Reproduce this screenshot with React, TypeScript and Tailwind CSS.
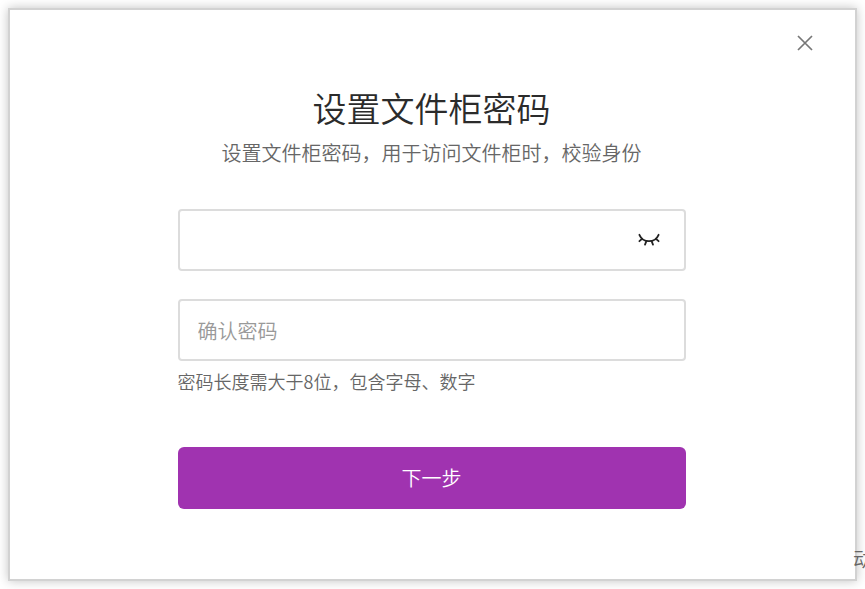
import { useState } from 'react'

const fieldStyle =
  'h-[62px] w-full rounded-[4px] border-2 border-[#dcdcdc] bg-white pl-[18px] pr-16 text-[20px] text-[#333] outline-none placeholder:text-[#999] focus:border-[#a033b0]'

function CloseIcon() {
  return (
    <svg viewBox="0 0 16 16" className="h-4 w-4" fill="none" stroke="currentColor" strokeWidth="1.7">
      <path d="M1 1l14 14M15 1L1 15" />
    </svg>
  )
}

function ClosedEyeIcon() {
  return (
    <svg
      viewBox="0 0 24 14"
      className="h-[14px] w-6"
      fill="none"
      stroke="currentColor"
      strokeWidth="1.8"
      strokeLinecap="round"
    >
      <path d="M1.4 1.8C3 5.6 6 8.2 11 8.2S19 5.6 20.6 1.8" />
      <path d="M4 5.8L1.4 8.2M8.4 8.2L7 11.6M13.6 8.2L15 11.6M18 5.8L20.600 8.2" />
    </svg>
  )
}

function OpenEyeIcon() {
  return (
    <svg viewBox="0 0 24 14" className="h-[14px] w-6" fill="none" stroke="currentColor" strokeWidth="1.8">
      <path d="M1 7c2.4-3.6 6-5.600 10-5.600S18.600 3.400 21 7c-2.400 3.600-6 5.600-10 5.600S3.400 10.600 1 7z" />
      <circle cx="11" cy="7" r="2.6" />
    </svg>
  )
}

export default function App() {
  const [open, setOpen] = useState(true)
  const [visible, setVisible] = useState(false)
  const [password, setPassword] = useState('')
  const [confirm, setConfirm] = useState('')

  const inputType = visible ? 'text' : 'password'

  return (
    <div className="relative flex min-h-screen overflow-hidden bg-white p-2 font-['Noto_Sans_CJK_SC',sans-serif] font-[350]">
      {open && (
        <div
          role="dialog"
          aria-modal="true"
          aria-labelledby="dialog-title"
          className="flex flex-1 flex-col border-2 border-[#d2d2d2] bg-white pr-[26px] pb-16 pl-6 shadow-[0_0_10px_rgba(0,0,0,0.24)]"
        >
          <div className="flex justify-end pt-[17px]">
            <button
              type="button"
              aria-label="关闭"
              onClick={() => setOpen(false)}
              className="mr-2 grid h-8 w-8 place-items-center text-[#777]"
            >
              <CloseIcon />
            </button>
          </div>

          <form onSubmit={(e) => e.preventDefault()} className="mx-auto w-full max-w-[508px] pt-6">
            <h1 id="dialog-title" className="text-center text-[34px] leading-[50px] text-[#2b2b2b]">
              设置文件柜密码
            </h1>
            <p className="pt-1 text-center text-[20px] leading-8 text-[#666]">
              设置文件柜密码，用于访问文件柜时，校验身份
            </p>

            <div className="relative mt-10">
              <input
                type={inputType}
                aria-label="密码"
                value={password}
                onChange={(e) => setPassword(e.target.value)}
                className={fieldStyle}
              />
              <button
                type="button"
                aria-label={visible ? '隐藏密码' : '显示密码'}
                onClick={() => setVisible(!visible)}
                className="absolute inset-y-0 right-6 text-[#222]"
              >
                {visible ? <OpenEyeIcon /> : <ClosedEyeIcon />}
              </button>
            </div>

            <input
              type={inputType}
              aria-label="确认密码"
              placeholder="确认密码"
              value={confirm}
              onChange={(e) => setConfirm(e.target.value)}
              className={`mt-7 ${fieldStyle}`}
            />
            <p className="pt-2 text-[18px] leading-6 text-[#666]">密码长度需大于8位，包含字母、数字</p>

            <button
              type="submit"
              className="mt-[54px] h-[62px] w-full rounded-[6px] bg-[#a033b0] text-[20px] text-white"
            >
              下一步
            </button>
          </form>
        </div>
      )}

      {/* end of the page text behind the dialog */}
      <span className="absolute -right-2 bottom-4 text-[20px] leading-7 text-[#666]">动</span>
    </div>
  )
}
